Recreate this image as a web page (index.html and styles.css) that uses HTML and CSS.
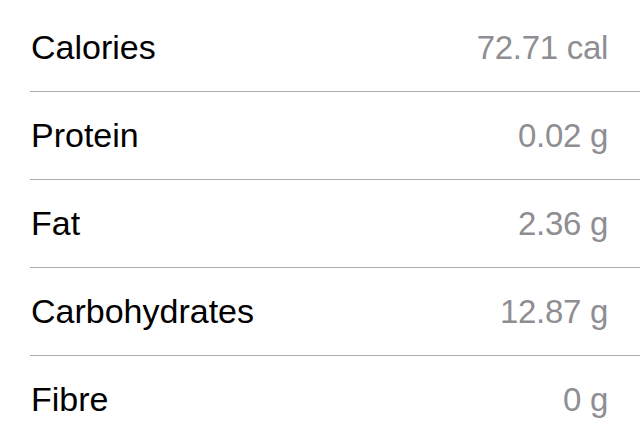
FILE: index.html
```html
<!DOCTYPE html>
<html>
<head>
<meta charset="utf-8">
<link rel="stylesheet" href="styles.css">
</head>
<body>
<ul class="list">
  <li class="row"><span class="label">Calories</span><span class="value">72.71 cal</span></li>
  <li class="row"><span class="label">Protein</span><span class="value">0.02 g</span></li>
  <li class="row"><span class="label">Fat</span><span class="value">2.36 g</span></li>
  <li class="row"><span class="label">Carbohydrates</span><span class="value">12.87 g</span></li>
  <li class="row"><span class="label">Fibre</span><span class="value">0 g</span></li>
</ul>
</body>
</html>
```
FILE: styles.css
```css
html, body {
  margin: 0;
  padding: 0;
  background: #ffffff;
  overflow: hidden;
}
body {
  font-family: "Liberation Sans", Arial, sans-serif;
}
.list {
  list-style: none;
  margin: 0;
  padding: 4px 0 0 30px;
}
.row {
  box-sizing: border-box;
  height: 88px;
  display: flex;
  align-items: center;
  justify-content: space-between;
  padding: 0 32px 0 1px;
  border-bottom: 1px solid #aeaeb2;
  font-size: 34px;
}
.label {
  color: #000000;
}
.value {
  color: #8e8e93;
  font-size: 33px;
  letter-spacing: -0.3px;
}
```
